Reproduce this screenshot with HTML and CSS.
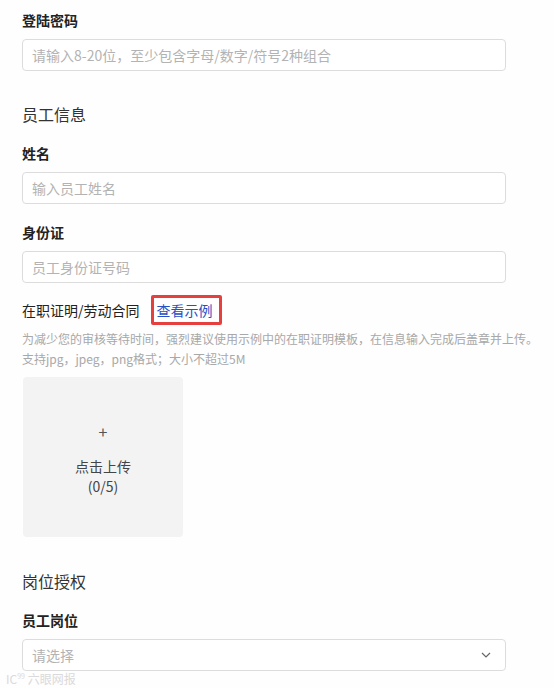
FILE: index.html
```html
<!DOCTYPE html>
<html lang="zh-CN">
<head>
<meta charset="utf-8">
<title>员工信息</title>
<link rel="stylesheet" href="styles.css">
</head>
<body>
<div class="page">
  <div class="field first">
    <div class="field-label">登陆密码</div>
    <input class="text-input" type="text" placeholder="请输入8-20位，至少包含字母/数字/符号2种组合">
  </div>

  <div class="section-title">员工信息</div>

  <div class="field">
    <div class="field-label">姓名</div>
    <input class="text-input" type="text" placeholder="输入员工姓名">
  </div>

  <div class="field">
    <div class="field-label">身份证</div>
    <input class="text-input" type="text" placeholder="员工身份证号码">
  </div>

  <div class="upload-field">
    <div class="upload-head">
      <span class="upload-title">在职证明/劳动合同</span>
      <span class="example-box"><a class="example-link" href="#">查看示例</a></span>
    </div>
    <div class="upload-desc">
      <div>为减少您的审核等待时间，强烈建议使用示例中的在职证明模板，在信息输入完成后盖章并上传。</div>
      <div>支持jpg，jpeg，png格式；大小不超过5M</div>
    </div>
    <div class="upload-box">
      <div class="upload-plus">+</div>
      <div class="upload-text">点击上传</div>
      <div class="upload-count">(0/5)</div>
    </div>
  </div>

  <div class="section-title second">岗位授权</div>

  <div class="field">
    <div class="field-label">员工岗位</div>
    <div class="select">
      <span class="select-placeholder">请选择</span>
      <svg class="chevron" width="10" height="6" viewBox="0 0 10 6"><path d="M1 1 L5 5 L9 1" fill="none" stroke="#666" stroke-width="1.2"/></svg>
    </div>
  </div>
</div>
<div class="watermark">IC<sup>99</sup> 六眼网报</div>
</body>
</html>
```

FILE: styles.css
```css
html, body {
  margin: 0;
  padding: 0;
  background: #fefefe;
}
body {
  font-family: "Noto Sans CJK SC", "Noto Sans", sans-serif;
  color: #222;
  width: 554px;
  height: 688px;
  overflow: hidden;
  position: relative;
}
.page {
  padding: 10px 0 0 22px;
  display: flex;
  flex-direction: column;
}
.field {
  display: flex;
  flex-direction: column;
  gap: 9px;
  margin-top: 18px;
}
.field.first {
  margin-top: 0;
}
.field-label {
  font-size: 14px;
  line-height: 20px;
  font-weight: bold;
  color: #222;
}
.text-input {
  box-sizing: border-box;
  width: 484px;
  height: 32px;
  border: 1px solid #dcdcdc;
  border-radius: 4px;
  padding: 0 9px;
  font-family: inherit;
  font-size: 14px;
  color: #333;
  background: #fff;
  outline: none;
  margin: 0;
}
.text-input::placeholder {
  color: #b3b3b3;
}
.section-title {
  font-size: 16px;
  line-height: 22px;
  color: #333;
  margin-top: 32px;
}
.upload-field {
  margin-top: 12px;
  display: flex;
  flex-direction: column;
}
.upload-head {
  display: flex;
  align-items: center;
  height: 30px;
}
.upload-title {
  font-size: 14px;
  line-height: 20px;
  color: #222;
}
.example-box {
  margin-left: 11px;
  box-sizing: border-box;
  width: 71px;
  height: 30px;
  border: 3px solid #e5403d;
  border-radius: 2px;
  display: flex;
  align-items: center;
  padding-left: 3px;
}
.example-link {
  font-size: 14px;
  line-height: 20px;
  color: #2a4fc5;
  text-decoration: none;
}
.upload-desc {
  margin-top: 4px;
  font-size: 12px;
  line-height: 20px;
  color: #a8a8a8;
  white-space: nowrap;
}
.upload-box {
  margin-top: 8px;
  margin-left: 1px;
  width: 160px;
  height: 160px;
  background: #f3f3f3;
  border-radius: 4px;
  display: flex;
  flex-direction: column;
  align-items: center;
  color: #444;
  font-size: 14px;
  line-height: 20px;
}
.upload-plus {
  margin-top: 44px;
  font-size: 16px;
  line-height: 20px;
  color: #555;
}
.upload-text {
  margin-top: 15px;
}
.section-title.second {
  margin-top: 33px;
}
.select {
  box-sizing: border-box;
  width: 484px;
  height: 32px;
  border: 1px solid #dcdcdc;
  border-radius: 4px;
  padding: 0 9px;
  display: flex;
  align-items: center;
  justify-content: space-between;
  background: #fff;
}
.select-placeholder {
  font-size: 14px;
  color: #b3b3b3;
}
.chevron {
  margin-right: 5px;
}
.watermark {
  position: absolute;
  left: 6px;
  top: 668px;
  font-size: 12px;
  line-height: 16px;
  color: #dadada;
}
.watermark sup {
  font-size: 7px;
}
```
